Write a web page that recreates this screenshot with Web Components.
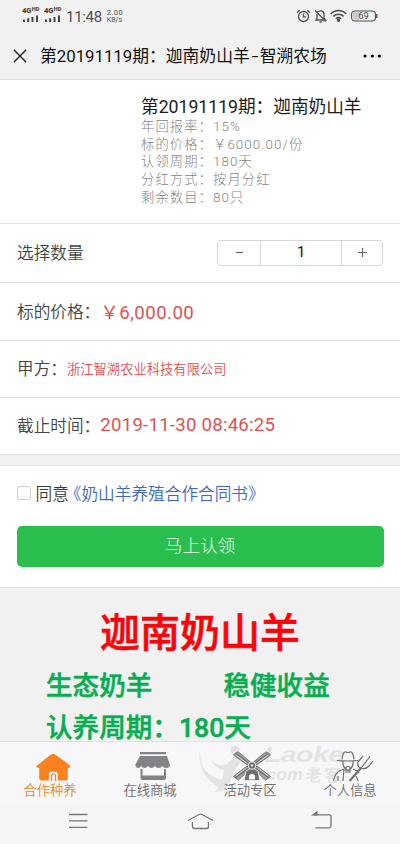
<!DOCTYPE html>
<html lang="zh-CN"><head><meta charset="utf-8"><title>智溯农场</title>
<style>
html,body{margin:0;height:100%;overflow:hidden}
body{font-family:Roboto,"Noto Sans CJK SC",sans-serif;background:#f1f1f1}
</style></head><body>
<farm-page></farm-page>
<script>
const define=(name,html)=>customElements.define(name,class extends HTMLElement{
  constructor(){super();const t=document.createElement('template');t.innerHTML=html;
    this.attachShadow({mode:'open'}).append(t.content.cloneNode(true));}
});

define('status-bar',`<style>
:host{display:flex;height:33px;align-items:center;padding:0 22px;box-sizing:border-box;color:#505050}
.sig{width:18px;height:16px;margin-right:4px;margin-top:-3px}
.time{font-size:15px;line-height:20px;letter-spacing:-.3px;margin:0}
.rate{font-size:7px;line-height:6.7px;margin:0 auto 0 5px;padding-top:0}
.rate b{display:block;font-weight:400;font-size:7.5px;letter-spacing:.4px}
.r{display:flex;gap:3px;align-items:center;margin-top:-2px}
</style>
<svg class="sig" viewBox="0 0 18 16"><text x="0" y="6" font-size="7.200" font-weight="900" fill="#444" textLength="9.500" lengthAdjust="spacingAndGlyphs">4G</text><text x="9.800" y="4.300" font-size="5" font-weight="900" fill="#444" textLength="7.500" lengthAdjust="spacingAndGlyphs">HD</text><path d="M2 15v-2.500M6.200 15v-3.700M10.500 15v-5M15 15V8.500" stroke="#444" stroke-width="2"/></svg>
<svg class="sig" viewBox="0 0 18 16"><text x="0" y="6" font-size="7.200" font-weight="900" fill="#444" textLength="9.500" lengthAdjust="spacingAndGlyphs">4G</text><text x="9.800" y="4.300" font-size="5" font-weight="900" fill="#444" textLength="7.500" lengthAdjust="spacingAndGlyphs">HD</text><path d="M2 15v-2.500M6.200 15v-3.700M10.500 15v-5M15 15V8.500" stroke="#444" stroke-width="2"/></svg>
<span class="time">11:48</span><span class="rate"><b>2.00</b>KB/s</span>
<div class="r">
<svg width="15" height="14" viewBox="0 0 15 14" fill="none" stroke="#505050" stroke-width="1.3"><circle cx="7.5" cy="7.500" r="5"/><path d="M7.500 4.500v3.300h2.600M1 3.700 3.700 1.200M14 3.700l-2.700-2.500" /></svg>
<svg width="13" height="14" viewBox="0 0 13 14" fill="none" stroke="#505050" stroke-width="1.3"><path d="M3 3.500C5 1 10 1 10 5.500V9l1.500 2H2l1-2V5M1.200 1.500l10.500 11M5.500 13h2.200"/></svg>
<svg width="17" height="13" viewBox="0 0 17 13" fill="none" stroke="#505050" stroke-width="1.5"><path d="M.8 4.800c4.400-4.400 11-4.400 15.400 0M3.300 7.400c3-3 7.400-3 10.400 0M5.800 9.800c1.700-1.500 3.700-1.500 5.400 0"/><circle cx="8.500" cy="11.200" r="1" fill="#505050"/></svg>
<svg width="28" height="12" viewBox="0 0 28 12"><rect x="1.600" y="1" width="23.800" height="10" rx="3.200" fill="#f2f2f2" stroke="#505050" stroke-width="1.100"/><path d="M4.500 2H9v8H4.500Q2.600 10 2.600 8V4Q2.600 2 4.500 2" fill="#ccc"/><path d="M26.800 4v4" stroke="#505050" stroke-width="1.400"/><text x="8.300" y="8.900" font-size="8.200" fill="#444" textLength="10.500" lengthAdjust="spacingAndGlyphs">69</text></svg>
</div>`);

define('title-bar',`<style>
:host{display:flex;height:47px;align-items:center;padding:0 18px 0 13px;box-sizing:border-box;color:#111;border-bottom:1px solid #dedede}
h1{font-size:16.8px;font-weight:400;line-height:24px;margin:0 auto 0 13px;white-space:nowrap}
i{font-style:normal;display:inline-block;width:10px;text-align:center;transform:scaleX(1.4)}
</style>
<svg width="14" height="14" viewBox="0 0 14 14"><path d="M.8.8l12.400 12.400M13.200.8.8 13.200" stroke="#222" stroke-width="1.400"/></svg>
<h1>第20191119期：迦南奶山羊<i>-</i>智溯农场</h1>
<svg width="20" height="4" viewBox="0 0 20 4"><circle cx="3" cy="2" r="1.600"/><circle cx="10.300" cy="2" r="1.600"/><circle cx="17.300" cy="2" r="1.600"/></svg>`);

define('product-card',`<style>
:host{display:block;height:144px;box-sizing:border-box;background:#fff;border-bottom:1px solid #e2e2e2;padding:17px 0 0 141px;color:#858585;font-weight:300}
::slotted(h2){font-size:17.650px;line-height:20px;font-weight:400!important;color:#1c1c1c;margin:0 0 1px!important;white-space:nowrap}
::slotted(p){font-size:13.300px;line-height:17.700px;letter-spacing:1.100px;margin:0!important;white-space:nowrap}
</style><slot></slot>`);

define('form-row',`<style>
:host{display:flex;align-items:center;height:var(--h,57px);box-sizing:border-box;background:#fff;border-bottom:1px solid #e2e2e2;padding:0 17px 2px;font-size:16.670px;font-weight:350;color:#444;white-space:nowrap}
::slotted(b){font-weight:var(--w,400)!important;color:#e05252}
::slotted(qty-stepper){margin-left:auto}
</style><slot></slot>`);

define('qty-stepper',`<style>
:host{display:grid;grid-template-columns:42px 81px 41px;height:26px;width:166px;border:1px solid #d6d6d6;border-radius:3px;box-sizing:border-box;font-size:15.500px;font-weight:400;line-height:23px;text-align:center;color:#222;position:relative;top:1px}
span+span{border-left:1px solid #d6d6d6}
svg{display:block;margin:6px auto}
</style><span><svg width="11" height="11"><path d="M2 5.500h7" stroke="#666" stroke-width="1.200"/></svg></span><span>1</span><span><svg width="11" height="11"><path d="M1 5.500h9M5.500 1v9" stroke="#666" stroke-width="1.200"/></svg></span>`);

define('agree-panel',`<style>
:host{display:block;background:#fff;height:123px;box-sizing:border-box;margin-top:10px;border-top:1px solid #e4e4e4;border-bottom:1px solid #e2e2e2;padding:15px 16.500px 0}
label{display:flex;align-items:center;height:24px;font-size:16.670px;font-weight:350;color:#3c3c3c;white-space:nowrap}
.c{width:12px;height:12px;border:1px solid #ccc;border-radius:2.500px;margin-right:5px}
a{color:#4068c0;margin-left:-4px}
button{display:block;width:100%;height:41px;margin:21px 0 0;border:0;border-radius:5px;background:#2abe4e;color:#f4fff4;font:300 17.600px/41px Roboto,"Noto Sans CJK SC",sans-serif;padding:0}
</style><label><span class="c"></span>同意<a>《奶山羊养殖合作合同书》</a></label><button>马上认领</button>`);

define('promo-copy',`<style>
:host{display:block;font-weight:500;color:#09ad51;padding:19.500px 0 0 46px;font-size:26.600px;line-height:42.500px;white-space:nowrap;-webkit-text-stroke:.5px #09ad51}
h2{font-size:40px;font-weight:500;line-height:52px;color:#f90408;margin:0 0 5px -46px;text-align:center;-webkit-text-stroke:.6px #f90408}
div{display:flex;gap:71px}
</style><h2>迦南奶山羊</h2><div><span>生态奶羊</span><span>稳健收益</span></div><div>认养周期：180天</div>`);

define('tab-item',`<style>
:host{display:flex;flex-direction:column;align-items:center;width:100px;color:var(--c,#6c6c6e);font-size:13.300px;font-weight:350;line-height:18px;padding-top:9px;box-sizing:border-box}
::slotted(svg){display:block;height:31px;width:42px}
</style><slot name="icon"></slot><slot></slot>`);

define('water-mark',`<style>
:host{position:absolute;left:196px;top:742px;width:160px;height:54px;pointer-events:none;opacity:.8}
</style><svg width="160" height="54" viewBox="0 0 160 54" fill="#dfdfe2" font-family="Liberation Sans,sans-serif" font-weight="bold"><path d="M4 5Q2 30 22 37Q28 38 31 32L45 12 49 12Q38 28 34 40Q29 51 18 50Q26 47 19 43Q1 31 4 5"/><circle cx="39" cy="8" r="4.500"/><path d="M14 16Q20 25 30 23L42 12 46 18 34 34 26 41 28 28Q18 26 14 16"/><g font-style="italic"><text x="68" y="20" font-size="22" textLength="80" lengthAdjust="spacingAndGlyphs">Laoke</text><text x="65" y="38" font-size="16" textLength="42" lengthAdjust="spacingAndGlyphs">.com</text></g><text x="110" y="39" font-size="15.500" textLength="34" font-family="Noto Sans CJK SC,sans-serif">老客</text></svg>`);

define('tab-bar',`<style>
:host{display:block;background:#f7f7fa;border-top:1px solid #e3e3e3;height:62px;box-sizing:border-box}
nav{display:flex;position:relative;z-index:1}
.on{--c:#e58a25}
</style><water-mark></water-mark><nav>
<tab-item class="on"><svg slot="icon" viewBox="0 0 42 31"><path fill="#fa821e" d="M23 3.500Q21 1.800 19 3.500L4.500 15q-.5 2 2.700 2v10q0 2.500 2 2.500h7.600v-6q0-2.800 3-2.800h3q3 0 3 2.800v6h7.500q2.500 0 2.500-2.500V17q3.500 0 2.200-2.200L35 12z" transform="translate(3)"/><path fill="none" stroke="#fa821e" stroke-width="1.200" d="M22.500 30v-6q2-2.500 4 0v6"/></svg>合作种养</tab-item>
<tab-item><svg slot="icon" viewBox="0 0 42 31"><g transform="translate(3)"><path fill="#838387" d="M8 1h26v2.300H8zM8 5h27l3 9q-.5 3-4 3-2.500 0-3.500-2-1.500 2-4 2t-3.500-2q-1.500 2-3.500 2t-3.500-2q-1.500 2-3.500 2t-3.500-2q-1 2-2.500 2-3 0-3-3.500z"/><path fill="#838387" d="M8.500 18h2v6.500h21.500V18h2v9q0 2-2 2H10.500q-2 0-2-2z"/></g></svg>在线商城</tab-item>
<tab-item><svg slot="icon" viewBox="0 0 42 31"><g transform="translate(2)"><g fill="#a5a5a8" stroke="#747477" stroke-width="1"><path d="M2.500 4 7 .8l13 10.700-3 3zM35 .8 39.500 4 25 14.500l-3-3zM2.500 25.500 16 15l3 3L7.500 29zM39.500 25.500 26 15l-3 3L34.500 29z"/></g><path stroke="#707073" stroke-width="1.500" d="M4 2 38 27M38 2 4 27"/><path stroke="#e8e8eb" stroke-width=".7" d="M5 4l11 8M37 4l-11 8M5 25l10-8M37 25l-10-8"/><path fill="#707073" stroke="#f7f7fa" stroke-width=".8" d="M15 20 21 16.500 27 20l2 9.500H13z"/><circle cx="21" cy="14.500" r="3.800" fill="#707073" stroke="#eee"/><circle cx="21" cy="14.500" r="1.200" fill="#ddd"/><path fill="#f7f7fa" d="M18 28.500v-4q3-3.500 6 0v4z"/></g></svg>活动专区</tab-item>
<tab-item><svg slot="icon" viewBox="0 0 42 31" style="overflow:visible"><g fill="none" stroke="#707073" stroke-width="1.200" transform="translate(3)"><path d="M5 9.500q11 1 21 0M10 8.500q1-9 4-7.500 2 1 4 0 3-1 4 7.500M11 10.500v3q1 4 5 6 4-2 5-6v-3M12 18q-9 2-10.500 12M6 30v-5M12 18l-1 12M21 18q4 1 6 4M24 25l2 5M14 16q2-1 4 0v5h-4z"/><path stroke-width="2.200" d="M17.500 30 29.500 16.500"/><path d="M26 11q-1 5 3 6 4 2 8-2M26 11l5-6M29.500 16.500 38 5.500M37 15l4-5"/></g></svg>个人信息</tab-item>
</nav>`);

define('system-nav',`<style>
:host{display:flex;height:41px;background:#f6f6f7}
svg{display:block}
</style><svg width="400" height="41" viewBox="0 0 400 41" fill="none" stroke="#77777a" stroke-width="1.300"><path d="M69 11.500h18.500M69 17.900h18.500M69 24.400h18.500M188 17.500l11-6q1.500-.8 3 0l11 6M192.500 19v4.500q0 2 2 2h12q2 0 2-2V19M314 11.800h15.500q1.500 0 1.500 1.500v10q0 1.500-1.500 1.500h-14"/><path d="M317 9l-4 2.800h4z" fill="#77777a"/></svg>`);

define('farm-page',`<style>
:host{display:flex;flex-direction:column;height:844px;width:400px;overflow:hidden;position:relative;background:#f1f1f1}
promo-copy{flex:1;min-height:0;overflow:hidden}
.small{font-size:13.300px;--w:350}
.date{font-size:18.600px;letter-spacing:.25px}
.price{font-size:18.600px;letter-spacing:.45px}
</style>
<status-bar></status-bar><title-bar></title-bar>
<product-card><h2>第20191119期：迦南奶山羊</h2><p>年回报率：15%</p><p>标的价格：￥6000.00/份</p><p>认领周期：180天</p><p>分红方式：按月分红</p><p>剩余数目：80只</p></product-card>
<form-row style="--h:59px">选择数量<qty-stepper></qty-stepper></form-row>
<form-row style="--h:58px">标的价格：<b class="price">￥6,000.00</b></form-row>
<form-row>甲方：<b class="small">浙江智溯农业科技有限公司</b></form-row>
<form-row>截止时间：<b class="date">2019-11-30 08:46:25</b></form-row>
<agree-panel></agree-panel><promo-copy></promo-copy><tab-bar></tab-bar><system-nav></system-nav>`);
</script></body></html>
